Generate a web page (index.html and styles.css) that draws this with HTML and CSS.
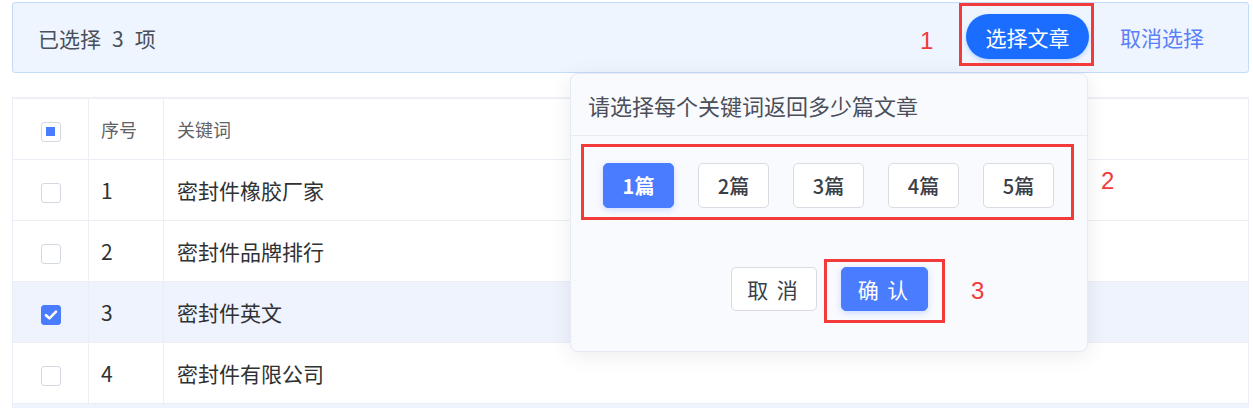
FILE: index.html
```html
<!DOCTYPE html>
<html lang="zh">
<head>
<meta charset="utf-8">
<link rel="stylesheet" href="styles.css">
</head>
<body>
<div class="page">
  <div class="bar">
    <div class="bar-text">已选择<span class="bar-count">3</span>项</div>
    <div class="bar-actions">
      <button class="btn-pill">选择文章</button>
      <button class="btn-link">取消选择</button>
    </div>
  </div>

  <table class="grid">
    <colgroup><col class="c-check"><col class="c-no"><col></colgroup>
    <thead>
      <tr><th class="cell-check"><span class="cb cb-ind"><i></i></span></th><th>序号</th><th>关键词</th></tr>
    </thead>
    <tbody>
      <tr><td class="cell-check"><span class="cb"></span></td><td>1</td><td>密封件橡胶厂家</td></tr>
      <tr><td class="cell-check"><span class="cb"></span></td><td>2</td><td>密封件品牌排行</td></tr>
      <tr class="sel"><td class="cell-check"><span class="cb cb-on"><svg width="14" height="12" viewBox="0 0 14 12"><path d="M2 6.2 L5.4 9.4 L12 2.6" fill="none" stroke="#fff" stroke-width="2.6" stroke-linecap="round" stroke-linejoin="round"/></svg></span></td><td>3</td><td>密封件英文</td></tr>
      <tr><td class="cell-check"><span class="cb"></span></td><td>4</td><td>密封件有限公司</td></tr>
    </tbody>
  </table>
  <div class="grid-tail"></div>

  <div class="pop">
    <div class="pop-title">请选择每个关键词返回多少篇文章</div>
    <div class="pop-opts">
      <button class="opt opt-on">1篇</button>
      <button class="opt">2篇</button>
      <button class="opt">3篇</button>
      <button class="opt">4篇</button>
      <button class="opt">5篇</button>
    </div>
    <div class="pop-foot">
      <button class="fbtn">取 消</button>
      <button class="fbtn fbtn-pri">确 认</button>
    </div>
  </div>

  <div class="mark mark-1"></div>
  <div class="mark mark-2"></div>
  <div class="mark mark-3"></div>
  <div class="num num-1">1</div>
  <div class="num num-2">2</div>
  <div class="num num-3">3</div>
</div>
</body>
</html>
```
FILE: styles.css
```css
* { box-sizing: border-box; }
html, body { margin: 0; padding: 0; background: #fff; }
body {
  font-family: "Noto Sans CJK SC", "Noto Sans", sans-serif;
  color: #303133;
  width: 1253px;
  height: 408px;
  overflow: hidden;
}
.page { position: relative; padding: 2px 4px 0 12px; height: 408px; }
button { font-family: inherit; cursor: pointer; }

.bar {
  height: 71px;
  background: #eef5ff;
  border: 1px solid #c5dbfd;
  border-radius: 3px;
  display: flex;
  align-items: center;
  justify-content: space-between;
  padding: 0 28px 0 25px;
}
.bar-text { font-size: 21px; color: #4a4f5a; }
.bar-count { margin: 0 11px; }
.bar-actions { display: flex; align-items: center; gap: 15px; margin-top: -2px; }
.btn-pill {
  width: 123px; height: 45px;
  border: none; border-radius: 23px;
  background: #1a6dff; color: #fff;
  font-size: 21px; padding: 0;
  box-shadow: 0 2px 4px rgba(26,109,255,0.25);
}
.btn-link {
  border: none; background: transparent;
  color: #5b7ff7; font-size: 21px;
  padding: 0 16px; height: 45px;
}

.grid {
  margin-top: 24px;
  width: 1237px;
  border-collapse: collapse;
  border-top: 2px solid #eef0f5;
  border-left: 1px solid #ebeef5;
  border-right: 1px solid #ebeef5;
  table-layout: fixed;
}
.c-check { width: 76px; }
.c-no { width: 75px; }
.grid th, .grid td {
  text-align: left;
  border-bottom: 1px solid #ebeef5;
  border-right: 1px solid #ebeef5;
  padding: 0 12px;
  font-weight: normal;
}
.grid th { height: 61px; font-size: 18px; color: #606266; }
.grid td { height: 61px; font-size: 21px; color: #303133; }
.grid td:last-child, .grid th:last-child { padding-left: 13px; }
.grid .cell-check { text-align: center; padding: 0; }
.grid tr.sel td { background: #eef3fe; }
.grid-tail { width: 1237px; height: 6px; background: #eef3fe; border-left: 1px solid #ebeef5; }

.cb {
  display: inline-flex; align-items: center; justify-content: center;
  width: 20px; height: 20px;
  border: 1px solid #d4d8e0; border-radius: 3px;
  background: #fff; vertical-align: middle;
}
.cb-ind i { display: block; width: 9px; height: 9px; background: #4a7cff; }
.cb-on { background: #4a7cff; border-color: #4a7cff; }

.pop {
  position: absolute;
  left: 570px; top: 73px;
  width: 518px; height: 279px;
  background: #f9fafe;
  border: 1px solid #e6eaf4;
  border-radius: 8px;
  box-shadow: 0 4px 22px rgba(0,0,0,0.08);
}
.pop-title {
  height: 62px;
  padding-left: 17px;
  display: flex; align-items: center;
  font-size: 22px; color: #4a4f5a;
  border-bottom: 1px solid #e8ebf3;
}
.pop-opts {
  display: flex; gap: 24px;
  padding: 27px 0 0 32px;
}
.opt {
  width: 71px; height: 45px;
  border: 1px solid #d8dbe2; border-radius: 5px;
  background: #fff; color: #3b3f48;
  font-size: 20px; font-weight: 500; padding: 0;
}
.opt-on { background: #4a7cff; border-color: #4a7cff; color: #fff; font-weight: 700; box-shadow: 0 2px 6px rgba(74,124,255,0.25); }
.pop-foot {
  display: flex; justify-content: center; gap: 24px;
  margin-top: 59px;
}
.fbtn {
  width: 86px; height: 44px;
  border: 1px solid #d8dbe2; border-radius: 5px;
  background: #fff; color: #3b3f48;
  font-size: 21px; padding: 0; letter-spacing: 2px;
}
.fbtn-pri { width: 87px; background: #4a7cff; border-color: #4a7cff; color: #fff; box-shadow: 0 2px 6px rgba(74,124,255,0.25); }

.mark { position: absolute; border: 3px solid #f23a3a; }
.mark-1 { left: 959px; top: 3px; width: 135px; height: 63px; }
.mark-2 { left: 581px; top: 144px; width: 493px; height: 76px; }
.mark-3 { left: 824px; top: 259px; width: 121px; height: 64px; }
.num {
  position: absolute;
  font-family: "Liberation Sans", Arial, sans-serif;
  font-size: 24px; line-height: 24px;
  color: #f23a3a;
}
.num-1 { left: 920px; top: 29px; }
.num-2 { left: 1101px; top: 169px; }
.num-3 { left: 971px; top: 279px; }
```
